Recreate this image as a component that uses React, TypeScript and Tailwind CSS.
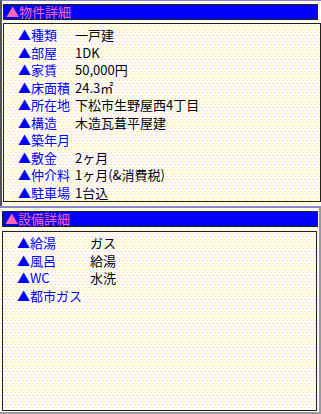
type Row = { label: string; value?: string };

const bukken: Row[] = [
  { label: "種類", value: "一戸建" },
  { label: "部屋", value: "1DK" },
  { label: "家賃", value: "50,000円" },
  { label: "床面積", value: "24.3㎡" },
  { label: "所在地", value: "下松市生野屋西4丁目" },
  { label: "構造", value: "木造瓦葺平屋建" },
  { label: "築年月" },
  { label: "敷金", value: "2ヶ月" },
  { label: "仲介料", value: "1ヶ月(&消費税)" },
  { label: "駐車場", value: "1台込" },
];

const setsubi: Row[] = [
  { label: "給湯", value: "ガス" },
  { label: "風呂", value: "給湯" },
  { label: "WC", value: "水洗" },
  { label: "都市ガス" },
];

// yellow dot texture behind each frame
function Dots({ id }: { id: string }) {
  return (
    <svg className="pointer-events-none absolute inset-0 h-full w-full" shapeRendering="crispEdges">
      <defs>
        <pattern id={id} width="4" height="6" patternUnits="userSpaceOnUse">
          <rect x="1" y="1" width="1" height="1" fill="#ffff00" />
          <rect x="3" y="4" width="1" height="1" fill="#ffff00" />
        </pattern>
      </defs>
      <rect width="100%" height="100%" fill={`url(#${id})`} />
    </svg>
  );
}

function Header({ title }: { title: string }) {
  return (
    <div className="h-[16px] border border-[#222] bg-[#0000ff] pl-[2px] text-[13px] leading-[14px] text-[#ff69b4] whitespace-nowrap">
      ▲{title}
    </div>
  );
}

function DetailTable({ rows, labelWidth }: { rows: Row[]; labelWidth: string }) {
  return (
    <div className="flex flex-col pt-[2px] pl-[14px]">
      {rows.map((r) => (
        <div key={r.label} className="flex h-[17.5px] items-center text-[13px] leading-[17px] whitespace-nowrap">
          <span className={`${labelWidth} shrink-0 text-[#0000ff]`}>▲{r.label}</span>
          <span className="text-black">{r.value}</span>
        </div>
      ))}
    </div>
  );
}

export default function App() {
  return (
    <div className="flex h-[414px] w-[321px] flex-col overflow-hidden bg-white font-['Noto_Sans_CJK_JP','Noto_Sans',sans-serif]">
      {/* upper frame: property details */}
      <div className="relative flex h-[206px] shrink-0 flex-col border-t border-l-2 border-t-[#7c7cc8] border-l-[#555] bg-white pt-[3px] pl-[1px]">
        <Dots id="dots-a" />
        <div className="relative mr-[3px]">
          <Header title="物件詳細" />
        </div>
        <div className="relative mt-[3px] h-[179px] border border-[#222]">
          <DetailTable rows={bukken} labelWidth="w-[57px]" />
        </div>
      </div>

      {/* lower frame: equipment */}
      <div className="relative flex flex-1 flex-col border-t-2 border-r-2 border-b-2 border-t-[#8a8ac8] border-r-[#9a9a9a] border-b-[#9a9a9a] bg-white pt-[3px] pl-[2px] pr-[1px] pb-[1px]">
        <Dots id="dots-b" />
        <div className="relative">
          <Header title="設備詳細" />
        </div>
        <div className="relative mt-[4px] mr-[1px] flex-1 border border-[#222]">
          <DetailTable rows={setsubi} labelWidth="w-[73px]" />
        </div>
      </div>
    </div>
  );
}
